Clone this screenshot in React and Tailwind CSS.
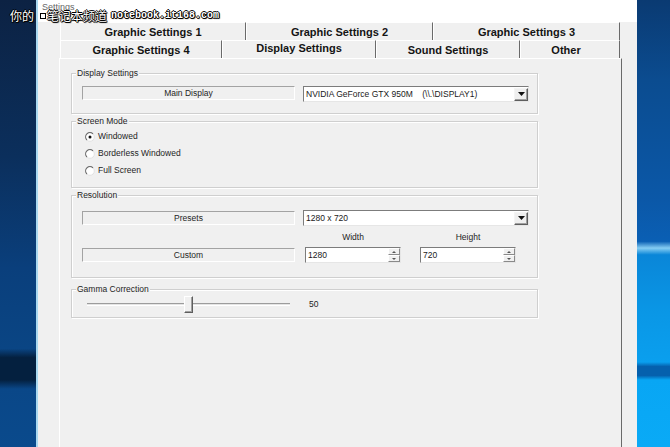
import React from "react";

function Group({ label, className, children }) {
  return (
    <div
      className={
        "relative w-[467px] border border-[#cfcfcf] shadow-[inset_1px_1px_0_#ffffff,1px_1px_0_#ffffff] " +
        className
      }
    >
      <span className="absolute -top-[7px] left-[4px] bg-[#f0f0f0] px-px text-[8.5px] leading-[12px] text-[#1e1e1e]">
        {label}
      </span>
      {children}
    </div>
  );
}

function StaticBox({ children }) {
  return (
    <div className="flex h-[14px] w-[213px] shrink-0 items-center justify-center border border-t-[#a3a3a3] border-l-[#a3a3a3] border-b-white border-r-white text-[8.5px] text-[#1e1e1e]">
      {children}
    </div>
  );
}

function Combo({ children }) {
  return (
    <div className="ml-[8px] flex h-[16px] w-[226px] items-center border border-t-[#7c7c7c] border-l-[#7c7c7c] border-b-[#e6e6e6] border-r-[#e6e6e6] bg-white">
      <div className="flex-1 whitespace-pre pl-[2px] text-[8.5px] leading-[14px] text-[#1a1a1a]">{children}</div>
      <div className="flex h-[13px] w-[14px] items-center justify-center border border-t-[#f4f4f4] border-l-[#f4f4f4] border-b-[#5e5e5e] border-r-[#5e5e5e] bg-[#efefef] shadow-[inset_-1px_-1px_0_#a0a0a0]">
        <svg width="7" height="4" viewBox="0 0 7 4">
          <polygon points="0,0 7,0 3.5,4" fill="#111" />
        </svg>
      </div>
    </div>
  );
}

function SpinInput({ value, className }) {
  return (
    <div
      className={
        "flex h-[16px] w-[96px] items-stretch border border-t-[#7c7c7c] border-l-[#7c7c7c] border-b-[#e6e6e6] border-r-[#e6e6e6] bg-white " +
        className
      }
    >
      <div className="flex-1 pl-[2px] text-[8.5px] leading-[14px] text-[#1a1a1a]">{value}</div>
      <div className="flex w-[12px] flex-col">
        <div className="flex h-[7px] items-center justify-center border border-t-white border-l-white border-b-[#8a8a8a] border-r-[#8a8a8a] bg-[#f0f0f0]">
          <svg width="4" height="2" viewBox="0 0 4 2">
            <polygon points="2,0 4,2 0,2" fill="#555" />
          </svg>
        </div>
        <div className="flex h-[7px] items-center justify-center border border-t-white border-l-white border-b-[#8a8a8a] border-r-[#8a8a8a] bg-[#f0f0f0]">
          <svg width="4" height="2" viewBox="0 0 4 2">
            <polygon points="0,0 4,0 2,2" fill="#555" />
          </svg>
        </div>
      </div>
    </div>
  );
}

function Radio({ checked, label }) {
  return (
    <div className="flex h-[17px] items-center">
      <svg width="10" height="10" viewBox="0 0 10 10" className="shrink-0">
        <circle cx="5" cy="5" r="4.3" fill="#ffffff" stroke="#e2e2e2" strokeWidth="1" />
        <path d="M8 1.9 A4.3 4.3 0 0 0 1.9 8" fill="none" stroke="#6a6a6a" strokeWidth="1.1" />
        {checked && <circle cx="5" cy="5" r="1.5" fill="#111" />}
      </svg>
      <span className="ml-[3px] text-[8.5px] text-[#1e1e1e]">{label}</span>
    </div>
  );
}

const tabBase =
  "flex h-full items-center justify-center border-t border-l border-r border-t-white border-l-white border-r-[#6a6a6a] text-[11px] font-bold text-[#141414]";

export default function App() {
  return (
    <div className="relative flex h-[447px] w-[670px] overflow-hidden font-['Liberation_Sans',Arial,sans-serif]">
      {/* left desktop strip */}
      <div className="h-full w-[36px] bg-[linear-gradient(180deg,#0c2243_0%,#0b2f5c_35%,#0a3f7c_60%,#0a4584_78%,#04203f_80%,#04203f_85%,#0a4788_87%,#0a4a8c_100%)]" />

      {/* window */}
      <div className="flex h-full w-[601px] flex-col border-l-2 border-l-[#a9d8f0] bg-[#f0f0f0]">
        <div className="h-[22px] bg-white pl-[4px] pt-[1px] text-[9px] text-[#666]">Settings</div>
        <div className="flex flex-1 flex-col pl-[21px] pr-[15px]">
          {/* row 1 */}
          <div className="flex h-[18px] pl-px">
            <div className={tabBase + " w-[186px] pt-[2px]"}>Graphic Settings 1</div>
            <div className={tabBase + " w-[187px] pt-[2px]"}>Graphic Settings 2</div>
            <div className={tabBase + " w-[187px] pt-[2px]"}>Graphic Settings 3</div>
          </div>
          {/* row 2 */}
          <div className="flex h-[18px] items-start pl-px">
            <div className={tabBase + " w-[162px] pt-[2px]"}>Graphic Settings 4</div>
            <div className={tabBase + " relative z-10 h-[19px] w-[154px] bg-[#f0f0f0] pb-[3px]"}>Display Settings</div>
            <div className={tabBase + " w-[144px] pt-[2px]"}>Sound Settings</div>
            <div className={tabBase + " w-[100px] pt-[2px] pr-[8px]"}>Other</div>
          </div>
          {/* page */}
          <div className="flex w-[563px] flex-1 flex-col border-t border-l border-r border-t-white border-l-white border-r-[#6a6a6a] pl-[11px] pt-[14px]">
            <Group label="Display Settings" className="h-[41px]">
              <div className="flex items-start pl-[10px] pt-[12px]">
                <StaticBox>Main Display</StaticBox>
                <Combo>{"NVIDIA GeForce GTX 950M    (\\\\.\\DISPLAY1)"}</Combo>
              </div>
            </Group>

            <Group label="Screen Mode" className="mt-[7px] h-[67px]">
              <div className="flex flex-col pl-[13px] pt-[6px]">
                <Radio checked label="Windowed" />
                <Radio label="Borderless Windowed" />
                <Radio label="Full Screen" />
              </div>
            </Group>

            <Group label="Resolution" className="mt-[7px] h-[83px]">
              <div className="flex flex-col pl-[10px] pt-[14px]">
                <div className="flex h-[16px] items-start">
                  <div className="pt-px">
                    <StaticBox>Presets</StaticBox>
                  </div>
                  <Combo>1280 x 720</Combo>
                </div>
                <div className="flex h-[21px] items-center text-[8.5px] text-[#1e1e1e]">
                  <div className="w-[213px]" />
                  <div className="ml-[10px] w-[96px] pt-[2px] text-center">Width</div>
                  <div className="ml-[19px] w-[96px] pt-[2px] text-center">Height</div>
                </div>
                <div className="flex h-[16px] items-center">
                  <StaticBox>Custom</StaticBox>
                  <SpinInput value="1280" className="ml-[10px]" />
                  <SpinInput value="720" className="ml-[19px]" />
                </div>
              </div>
            </Group>

            <Group label="Gamma Correction" className="mt-[11px] h-[29px]">
              <div className="flex h-full items-center pl-[15px] pt-px">
                <div className="relative h-[3px] w-[203px] border-t border-t-[#9c9c9c] border-b border-b-white bg-[#e4e4e4]">
                  <div className="absolute left-[97px] -top-[8px] h-[17px] w-[9px] border border-t-white border-l-white border-b-[#5e5e5e] border-r-[#5e5e5e] bg-[#f0f0f0] shadow-[inset_-1px_-1px_0_#a0a0a0]" />
                </div>
                <span className="ml-[19px] text-[8.5px] text-[#1e1e1e]">50</span>
              </div>
            </Group>
          </div>
        </div>
      </div>

      {/* right desktop strip */}
      <div className="h-full w-[33px] bg-[linear-gradient(180deg,#0a3a72_0%,#0b4c90_18%,#0b58a8_45%,#0a5fb4_54%,#86cdf3_55.5%,#0a86d8_57%,#0a97e6_70%,#0a9fee_81%,#0560ad_82%,#0560ad_84%,#08a6f4_85%,#0aaaf6_100%)]" />

      {/* watermark */}
      <div className="absolute left-[10px] top-[8px] flex items-center whitespace-nowrap text-white [text-shadow:1px_0_0_#000,-1px_0_0_#000,0_1px_0_#000,0_-1px_0_#000,1px_1px_1px_#000]">
        <span className="font-['Noto_Sans_CJK_SC',sans-serif] text-[12px] leading-[16px]">你的</span>
        <span className="ml-[7px] mr-[2px] h-[4px] w-[4px] bg-white shadow-[0_0_0_1px_#000]" />
        <span className="font-['Noto_Sans_CJK_SC',sans-serif] text-[12px] leading-[16px]">笔记本频道</span>
        <span className="ml-[4px] font-['Liberation_Mono',monospace] text-[10px] font-bold leading-[16px]">notebook.it168.com</span>
      </div>
    </div>
  );
}
